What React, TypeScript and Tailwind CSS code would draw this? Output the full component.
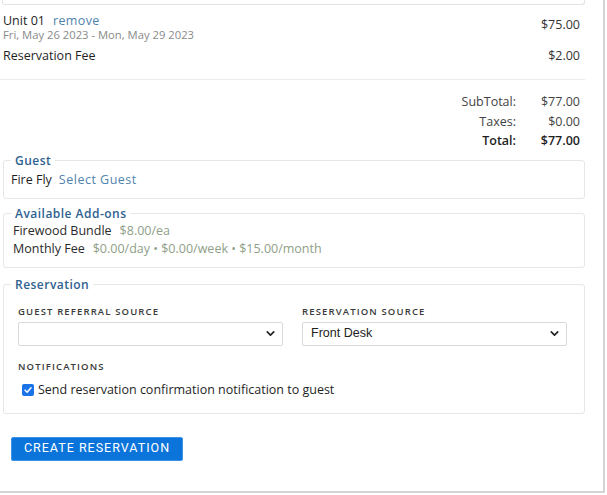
import { ChevronDown } from "lucide-react";

const font = { fontFamily: '"Open Sans", "Liberation Sans", sans-serif' };

export default function App() {
  return (
    <div className="w-[605px] h-[493px] bg-white border-r-2 border-b-2 border-[#d4d4d4] text-[#1f1f1f]" style={font}>
      <div className="w-[585px]">
        {/* tail of the box above */}
        <div className="ml-[2px] h-[5px] border border-t-0 border-[#e3e3e3] rounded-b-[3px]" />

        {/* LINE ITEMS */}
        <div className="pl-[3px] pr-[5px] pt-[8px]">
          <div className="flex justify-between items-start">
            <div>
              <div className="flex items-baseline gap-[8px] text-[12.5px] leading-[15px]">
                <span>Unit 01</span>
                <span className="text-[#4f83ad] tracking-[0.03em]">remove</span>
              </div>
              <div className="text-[11.25px] leading-[14px] text-[#8a8a8a]">Fri, May 26 2023 - Mon, May 29 2023</div>
            </div>
            <div className="text-[12.5px] leading-[16px] pt-[4px] text-[#333]">$75.00</div>
          </div>
          <div className="flex justify-between text-[12.5px] leading-[16px] mt-[6px]">
            <span>Reservation Fee</span>
            <span className="text-[#333]">$2.00</span>
          </div>
        </div>

        <div className="mt-[15px] h-px bg-[#ececec]" />

        {/* TOTALS */}
        <div className="grid grid-cols-[1fr_64px] pr-[5px] pt-[12px] text-[12.5px] leading-[19.5px] text-[#444]">
          <span className="text-right">SubTotal:</span>
          <span className="text-right">$77.00</span>
          <span className="text-right">Taxes:</span>
          <span className="text-right">$0.00</span>
          <span className="text-right font-semibold text-[#1f1f1f]">Total:</span>
          <span className="text-right font-semibold text-[#1f1f1f]">$77.00</span>
        </div>

        {/* GUEST */}
        <fieldset className="ml-[3px] mt-[3px] border border-[#e6e6e6] rounded-[3px] pl-[7px] pb-[9px]">
          <legend className="px-[4px] text-[12px] leading-[14px] font-semibold tracking-[0.04em] text-[#2f628f]">Guest</legend>
          <div className="flex gap-[7px] text-[12.5px] leading-[18px] mt-[3px]">
            <span className="font-medium">Fire Fly</span>
            <span className="text-[#4f83ad] tracking-[0.04em]">Select Guest</span>
          </div>
        </fieldset>

        {/* ADD-ONS */}
        <fieldset className="ml-[3px] mt-[8px] border border-[#e6e6e6] rounded-[3px] pl-[7px] pb-[9px]">
          <legend className="px-[4px] text-[12px] leading-[14px] font-semibold tracking-[0.04em] text-[#2f628f]">Available Add-ons</legend>
          <div className="pl-[2px] text-[12.5px] leading-[18px] text-[#2a2a2a] mt-[1px]">
            <div className="flex gap-[8px]">
              <span>Firewood Bundle</span>
              <span className="text-[#8fa088]">$8.00/ea</span>
            </div>
            <div className="flex gap-[8px]">
              <span>Monthly Fee</span>
              <span className="text-[#8fa088]">$0.00/day • $0.00/week • $15.00/month</span>
            </div>
          </div>
        </fieldset>

        {/* RESERVATION */}
        <fieldset className="ml-[3px] mt-[10px] border border-[#e6e6e6] rounded-[3px] pl-[7px] pr-[17px] pb-[15px]">
          <legend className="px-[4px] text-[12px] leading-[14px] font-semibold tracking-[0.04em] text-[#2f628f]">Reservation</legend>
          <div className="pl-[7px]">
            <div className="grid grid-cols-2 gap-x-[19px] mt-[14px]">
              <div>
                <div className="text-[9.5px] leading-[12px] font-semibold tracking-[0.12em] text-[#3a3a3a]">GUEST REFERRAL SOURCE</div>
                <div className="mt-[4px] h-[24px] border border-[#d9d9d9] rounded-[2px] flex items-center justify-end pr-[5px]">
                  <ChevronDown size={13} strokeWidth={3} className="text-[#222]" />
                </div>
              </div>
              <div>
                <div className="text-[9.5px] leading-[12px] font-semibold tracking-[0.12em] text-[#3a3a3a]">RESERVATION SOURCE</div>
                <div className="mt-[4px] h-[24px] border border-[#d9d9d9] rounded-[2px] flex items-center justify-between pl-[8px] pr-[5px]">
                  <span className="text-[12.5px] text-[#222]" style={{ fontFamily: '"Liberation Sans", Arial, sans-serif' }}>Front Desk</span>
                  <ChevronDown size={13} strokeWidth={3} className="text-[#222]" />
                </div>
              </div>
            </div>
            <div className="mt-[15px] text-[9.5px] leading-[12px] font-semibold tracking-[0.12em] text-[#3a3a3a]">NOTIFICATIONS</div>
            <label className="mt-[9px] ml-[4px] flex items-center gap-[4px] text-[12.5px] leading-[16px]">
              <span className="w-[12px] h-[12px] rounded-[2px] bg-[#1a73e8] flex items-center justify-center">
                <svg viewBox="0 0 12 12" className="w-[10px] h-[10px]">
                  <path d="M2.5 6.2 L5 8.6 L9.6 3.4" fill="none" stroke="#fff" strokeWidth="1.8" strokeLinecap="round" strokeLinejoin="round" />
                </svg>
              </span>
              <span>Send reservation confirmation notification to guest</span>
            </label>
          </div>
        </fieldset>

        {/* BUTTON */}
        <div className="pl-[11px] pt-[23px]">
          <button
            className="w-[172px] h-[24px] bg-[#0b74da] border border-[#3d93e6] rounded-[2px] text-white text-[12.5px] tracking-[0.08em] flex items-center justify-center"
            style={{ fontFamily: 'Roboto, "Liberation Sans", sans-serif' }}
          >
            CREATE RESERVATION
          </button>
        </div>
      </div>
    </div>
  );
}
